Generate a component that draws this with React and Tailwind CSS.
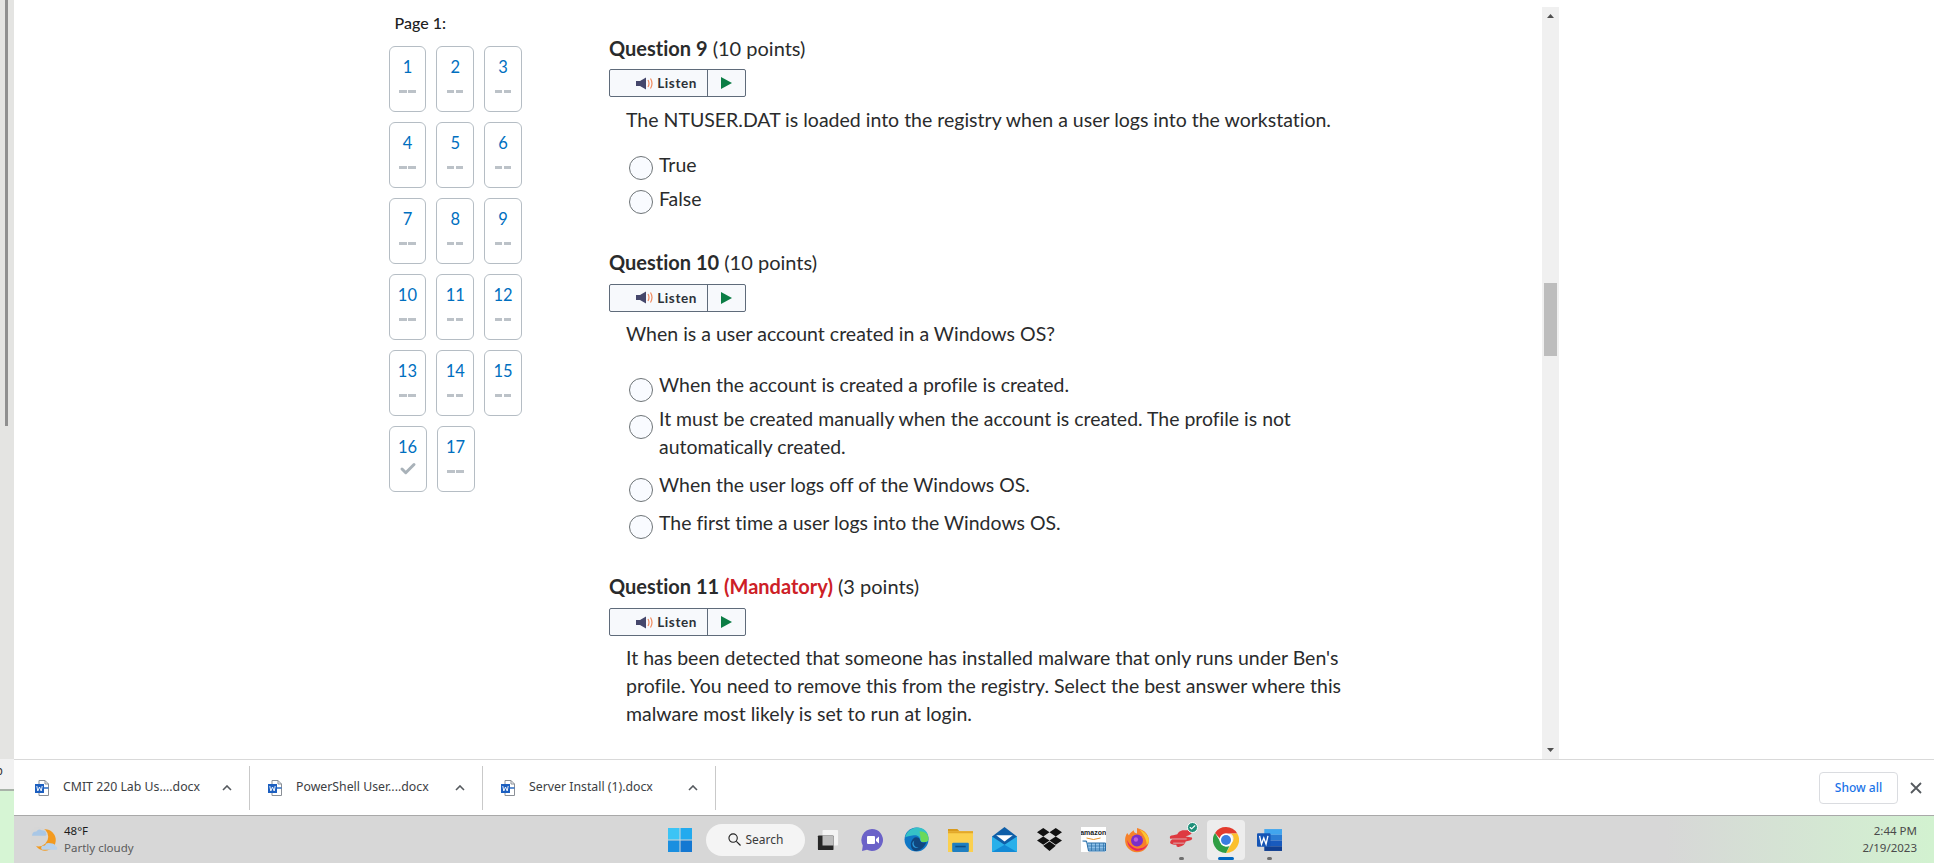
import { Check } from 'lucide-react'

const LATO = "font-['Lato',sans-serif]"
const NAV_ROWS = [
  ['1', '2', '3'],
  ['4', '5', '6'],
  ['7', '8', '9'],
  ['10', '11', '12'],
  ['13', '14', '15'],
  ['16', '17'],
]

function NavCard({ n }) {
  return (
    <div className="w-[38px] h-[66px] rounded-[6px] border border-[#b5bdc4] flex flex-col items-center bg-white">
      <span className="mt-[8px] h-[24px] leading-[24px] text-[16.500px] text-[#006fbf]">{n}</span>
      {n === '16' ? (
        <Check className="mt-[1px] w-[18px] h-[18px] text-[#a9b2b9]" strokeWidth={4} />
      ) : (
        <span className="mt-[11px] flex gap-[1.500px]">
          <span className="w-[7.500px] h-[3px] bg-[#bcc2c8]" />
          <span className="w-[7.500px] h-[3px] bg-[#bcc2c8]" />
        </span>
      )}
    </div>
  )
}

function Listen() {
  return (
    <div className="w-[137px] h-[28px] flex border border-[#5f6b7a] rounded-[2px] bg-[#f7f9fc]">
      <div className="w-[98px] flex items-center justify-end pr-[10px] border-r border-[#5f6b7a]">
        <svg viewBox="0 0 18 14" className="w-[18px] h-[15px] mr-[3px]">
          <path d="M0 4.500h4L10 1v12L4 9.500H0z" fill="#45476b" />
          <path d="M12 3.500q2 3.500 0 7M14.500 2q3 5 0 10" fill="none" stroke="#f08a5d" strokeWidth="1.200" />
        </svg>
        <span className="text-[13.500px] font-bold tracking-[0.6px] text-[#2c3138]">Listen</span>
      </div>
      <div className="flex-1 flex items-center justify-center">
        <svg viewBox="0 0 11 12" className="w-[11px] h-[12px]"><path d="M0 0l11 6-11 6z" fill="#0b7d45" /></svg>
      </div>
    </div>
  )
}

function Heading({ label, mandatory, points, className = '' }) {
  return (
    <div className={`h-[28px] leading-[28px] text-[20px] text-[#2a2b2c] ${className}`}>
      <span className="font-bold">{label}</span>
      {mandatory && <span className="font-bold text-[#cd2026]"> (Mandatory)</span>}
      <span> ({points} points)</span>
    </div>
  )
}

function Option({ children, className = '', radio = 'mt-[5px]' }) {
  return (
    <div className={`flex pl-[20px] ${className}`}>
      <div className="w-[24px] h-[28px] shrink-0">
        <div className={`w-[24px] h-[24px] rounded-full border border-[#6e7477] bg-[#f9fbff] ${radio}`} />
      </div>
      <span className="ml-[6px] w-[660px] leading-[28px] text-[19.450px] text-[#2a2b2c]">{children}</span>
    </div>
  )
}

function Body({ children, className = '' }) {
  return <p className={`ml-[17px] w-[725px] text-[19.500px] leading-[27.700px] text-[#2a2b2c] ${className}`}>{children}</p>
}

function Questions() {
  return (
    <div className="ml-[87px] pt-[34px] shrink-0">
      <Heading label="Question 9" points="10" />
      <div className="mt-[7px]"><Listen /></div>
      <Body className="mt-[9px]">The NTUSER.DAT is loaded into the registry when a user logs into the workstation.</Body>
      <Option className="mt-[17px]">True</Option>
      <Option className="mt-[6px]">False</Option>

      <Heading label="Question 10" points="10" className="mt-[35px]" />
      <div className="mt-[8px]"><Listen /></div>
      <Body className="mt-[8px]">When is a user account created in a Windows OS?</Body>
      <Option className="mt-[24px]" radio="mt-[7px]">When the account is created a profile is created.</Option>
      <Option className="mt-[6px]" radio="mt-[10px]">It must be created manually when the account is created. The profile is not automatically created.</Option>
      <Option className="mt-[10px]" radio="mt-[7px]">When the user logs off of the Windows OS.</Option>
      <Option className="mt-[10px]" radio="mt-[6px]">The first time a user logs into the Windows OS.</Option>

      <Heading label="Question 11" mandatory points="3" className="mt-[35px]" />
      <div className="mt-[8px]"><Listen /></div>
      <Body className="mt-[8px]">
        It has been detected that someone has installed malware that only runs under Ben's profile. You need to remove this from the registry. Select the best answer where this malware most likely is set to run at login.
      </Body>
    </div>
  )
}

function DocIcon() {
  return (
    <svg viewBox="0 0 14 16" className="w-[14px] h-[16px] shrink-0">
      <path d="M4 .5h6l3.500 3.500v11.500H4z" fill="#fff" stroke="#8a8f96" />
      <path d="M10 .5V4h3.500" fill="none" stroke="#8a8f96" />
      <path d="M8 8h5.500" stroke="#2b6cc4" strokeWidth="1.500" />
      <rect x="0" y="4" width="9" height="9" fill="#1c5fc0" />
      <path d="M1.800 6l1 5 1.700-4 1.700 4 1-5" fill="none" stroke="#fff" strokeWidth=".9" />
    </svg>
  )
}

function Download({ name }) {
  return (
    <div className="w-[233px] h-[44px] flex items-center border-r border-[#c9c9c9]">
      <span className="ml-[18px]"><DocIcon /></span>
      <span className="ml-[14px] w-[153px] text-[12.300px] text-[#3c4043] font-['Noto_Sans',sans-serif] whitespace-nowrap">{name}</span>
      <svg viewBox="0 0 10 6" className="ml-[6px] w-[10px] h-[6px]"><path d="M1 5l4-4 4 4" fill="none" stroke="#55595e" strokeWidth="1.600" /></svg>
    </div>
  )
}

function Shelf() {
  return (
    <div className="h-[56px] bg-white border-t border-[#d9d9d9] flex items-center justify-between">
      <div className="flex pl-[3px]">
        <Download name="CMIT 220 Lab Us....docx" />
        <Download name="PowerShell User....docx" />
        <Download name="Server Install (1).docx" />
      </div>
      <div className="flex items-center font-['Noto_Sans',sans-serif]">
        <div className="w-[79px] h-[32px] rounded-[4px] border border-[#dadce0] flex items-center justify-center text-[12px] font-medium text-[#1a73e8]">Show all</div>
        <svg viewBox="0 0 12 12" className="ml-[12px] mr-[12px] w-[12px] h-[12px]"><path d="M1 1l10 10M11 1L1 11" stroke="#55595e" strokeWidth="1.800" /></svg>
      </div>
    </div>
  )
}

const TaskIcons = {
  taskview: (
    <svg viewBox="0 0 24 24" className="w-[22px] h-[22px]">
      <rect x="6" y="1" width="17" height="17" rx="1" fill="#f4f4f4" />
      <rect x="1" y="7" width="17" height="16" rx="1" fill="#262626" />
      <rect x="6" y="7" width="12" height="11" fill="#bdbdbd" />
    </svg>
  ),
  video: (
    <svg viewBox="0 0 24 24" className="w-[24px] h-[24px]">
      <path d="M12 1a11 11 0 1 1-5 20.800L2 23l.8-5.500A11 11 0 0 1 12 1z" fill="#6b62c8" />
      <rect x="7" y="8" width="8" height="8" rx="1" fill="#fff" />
      <path d="M16 11l3-2.500v7L16 13z" fill="#fff" />
    </svg>
  ),
  edge: (
    <svg viewBox="0 0 24 24" className="w-[25px] h-[25px]">
      <circle cx="12" cy="12" r="11.500" fill="#0f77c6" />
      <path d="M1 10C3 3 9 .5 13 .5c6 0 10.500 4.500 10.500 10 0 3-2 4-4.500 4-2 0-3.500-.5-3.500-2 0-3-3-5-6-4.500-4 .6-7 1-8.500 2z" fill="#35c1c7" />
      <path d="M15 4c5 0 8.500 3 8.500 7 0 3-2 3.500-4.500 3.500-1.500 0-3-.5-3-2C16 9 15 6 15 4z" fill="#6bd95a" />
      <path d="M9 11c2-2 6-1 6.500 2 .5 2 3 2.500 6 1.500-2 5.500-6 8.500-10 8.500-3 0-5-3-5-6.500 0-2 1-4 2.500-5.500z" fill="#10477f" />
      <path d="M10 13c-2 3 0 7 4 7-3 1-6-1-6-4 0-1 1-2 2-3z" fill="#2d9fe0" />
    </svg>
  ),
  folder: (
    <svg viewBox="0 0 24 24" className="w-[25px] h-[25px]">
      <path d="M0 2h9l2 2H0z" fill="#d99a1c" />
      <rect x="0" y="4" width="24" height="20" fill="#fbd04f" />
      <rect x="0" y="4" width="24" height="2" fill="#e3a82a" />
      <rect x="4" y="15" width="16" height="9" rx="1" fill="#1f7fc1" />
      <rect x="7" y="18" width="10" height="1.500" fill="#0d4f85" />
    </svg>
  ),
  mail: (
    <svg viewBox="0 0 24 24" className="w-[25px] h-[25px]">
      <path d="M0 9L12 0l12 9v15H0z" fill="#0f5fa8" />
      <path d="M4 8h16l-8 6z" fill="#fff" />
      <path d="M0 9l12 8 12-8v15H0z" fill="#29b0ea" />
      <path d="M0 24l12-7 12 7z" fill="#128ad6" />
    </svg>
  ),
  dropbox: (
    <svg viewBox="0 0 24 24" className="w-[25px] h-[25px]">
      <path d="M6 1l6 4-6 4-6-4zM18 1l6 4-6 4-6-4zM6 9l6 4-6 4-6-4zM18 9l6 4-6 4-6-4zM12 14l6 4-6 5-6-5z" fill="#111" />
    </svg>
  ),
  amazon: (
    <div className="w-[25px] h-[25px] bg-white flex flex-col items-center overflow-hidden">
      <span className="text-[7px] leading-[9px] font-bold text-[#222] font-['Liberation_Sans',sans-serif] mt-[1px]">amazon</span>
      <svg viewBox="0 0 24 15" className="w-[25px] h-[15px]">
        <path d="M5 1q7 3 14 0" fill="none" stroke="#e8952a" strokeWidth="1" />
        <path d="M1 4h4l2 10h17V6H6" fill="#8fc1e8" stroke="#2a6ea6" strokeWidth="1" />
        <path d="M10 6v8M14 6v8M18 6v8M22 6v8M6 9h18M7 12h17" stroke="#2a6ea6" strokeWidth=".7" />
      </svg>
    </div>
  ),
  firefox: (
    <svg viewBox="0 0 24 24" className="w-[26px] h-[26px]">
      <path d="M12 1c8 2 11 7 11 11.500A11 11 0 1 1 1 12c0-3 1-5 2-6.500.5 1 1 1.500 1.500 2C6 5 8 4 9 3c0 2 1 2.500 3 3 0-2 0-3.500 0-5z" fill="#f7812a" />
      <path d="M14 2c5 2 9 6 9 10.500 0 2-1 3-2 4 0-5-3-10-7-14.500z" fill="#fbc82f" />
      <path d="M3 12c0 6 5 10 10 10 4 0 7-2 9-6-3 3-6 4-9 4-4 0-8-3-10-8z" fill="#e9235f" />
      <circle cx="12" cy="12.500" r="5.500" fill="#7b2fc9" />
      <circle cx="11" cy="11.500" r="2" fill="#c05bd9" />
    </svg>
  ),
  lastpass: (
    <div className="relative w-[25px] h-[25px]">
      <svg viewBox="0 0 24 24" className="w-[25px] h-[25px]">
        <path d="M8 7q1-3 5-4h6q3 0 3 2t-3 3l-3 1 6 1q1 2-2 3l-4 1q-1 4-6 5-3 1-3-2-5 0-6-2 0-2 2-3l-2-1q-1-3 3-3z" fill="#de3a41" />
        <path d="M2 11.500h15M4 15.500h11" stroke="#d7d7d7" strokeWidth=".7" />
      </svg>
      <span className="absolute -top-[5px] right-[-4px] w-[11px] h-[11px] rounded-full bg-[#1d8f79] border border-white flex items-center justify-center">
        <Check className="w-[7px] h-[7px] text-white" strokeWidth={4} />
      </span>
    </div>
  ),
  chrome: (
    <svg viewBox="0 0 24 24" className="w-[26px] h-[26px]">
      <path d="M12 0a12 12 0 0 1 10.400 6H12a6 6 0 0 0-5.800 4.400L1.900 5.500A12 12 0 0 1 12 0z" fill="#e33b2e" />
      <path d="M22.400 6A12 12 0 0 1 12 24l5.200-9a6 6 0 0 0-.7-9z" fill="#fbc02d" />
      <path d="M12 24A12 12 0 0 1 1.900 5.500L7 14a6 6 0 0 0 8.200 3.500z" fill="#2f9e44" />
      <circle cx="12" cy="12" r="6" fill="#fff" />
      <circle cx="12" cy="12" r="4.600" fill="#3b7de0" />
    </svg>
  ),
  word: (
    <svg viewBox="0 0 24 24" className="w-[25px] h-[25px]">
      <rect x="7" y="2" width="17" height="5.500" fill="#41a5ee" />
      <rect x="7" y="7.500" width="17" height="5.500" fill="#2b7cd3" />
      <rect x="7" y="13" width="17" height="5.500" fill="#185abd" />
      <rect x="7" y="18.500" width="17" height="4.500" fill="#103f91" />
      <rect x="0" y="6" width="13" height="13" rx="1" fill="#1655b5" />
      <path d="M2.500 8.500l1.800 8 2.200-6 2.200 6 1.800-8" fill="none" stroke="#fff" strokeWidth="1.300" />
    </svg>
  ),
}

function TaskIcon({ name, running, active }) {
  return (
    <div className="w-[44.200px] h-[48px] flex items-center justify-center">
      <div className={`w-[38px] h-[40px] rounded-[4px] flex flex-col items-center justify-center relative ${active ? 'bg-[#ededed]' : ''}`}>
        {TaskIcons[name]}
        {running && <span className="absolute bottom-[0px] w-[5px] h-[3px] rounded-full bg-[#6e6e6e]" />}
        {active && <span className="absolute bottom-[0px] w-[16px] h-[3px] rounded-full bg-[#0067c0]" />}
      </div>
    </div>
  )
}

function Weather() {
  return (
    <svg viewBox="0 0 26 26" className="w-[28px] h-[28px]">
      <circle cx="13" cy="13" r="10" fill="#f39a1f" />
      <circle cx="7" cy="10" r="9" fill="#d6d6d6" />
      <path d="M1 9q0-4 4-4 2-3 5-1 4 0 4 3 1 2-1 2z" fill="#a9c7e6" />
      <path d="M10 22q-2-4 3-4 1-3 5-2 4 0 5 3 2 1 1 3z" fill="#b9d2ec" />
    </svg>
  )
}

function Taskbar() {
  return (
    <div className="h-[48px] border-t border-[#a9a9a9] flex items-center bg-[linear-gradient(90deg,#d7d7d7_0%,#d7d7d7_86%,#d2f2d0_100%)] font-['Noto_Sans',sans-serif] overflow-hidden">
      <div className="w-[654px] flex items-center pl-[17px]">
        <Weather />
        <div className="ml-[5px] -mt-[2px] text-[11.500px] leading-[17px]">
          <div className="text-[#1b1b1b]">48°F</div>
          <div className="text-[#5c5c5c]">Partly cloudy</div>
        </div>
      </div>
      <svg viewBox="0 0 24 24" className="w-[24px] h-[24px]">
        <rect x="0" y="0" width="11.500" height="11.500" fill="#3cc4f5" />
        <rect x="12.500" y="0" width="11.500" height="11.500" fill="#23aaee" />
        <rect x="0" y="12.500" width="11.500" height="11.500" fill="#1a8fe0" />
        <rect x="12.500" y="12.500" width="11.500" height="11.500" fill="#1478d2" />
      </svg>
      <div className="ml-[14px] w-[99px] h-[32px] rounded-full bg-[#f4f4f4] flex items-center justify-center gap-[5px] text-[12px] text-[#3a3a3a]">
        <svg viewBox="0 0 14 14" className="w-[13px] h-[13px]">
          <circle cx="5.500" cy="5.500" r="4.500" fill="none" stroke="#222" strokeWidth="1.200" />
          <path d="M9 9l4.500 4.500" stroke="#222" strokeWidth="1.300" />
        </svg>
        Search
      </div>
      <div className="flex ml-[1px]">
        <TaskIcon name="taskview" />
        <TaskIcon name="video" />
        <TaskIcon name="edge" />
        <TaskIcon name="folder" />
        <TaskIcon name="mail" />
        <TaskIcon name="dropbox" />
        <TaskIcon name="amazon" />
        <TaskIcon name="firefox" />
        <TaskIcon name="lastpass" running />
        <TaskIcon name="chrome" active />
        <TaskIcon name="word" running />
      </div>
      <div className="ml-auto -mt-[2px] pr-[17px] text-right text-[11.500px] leading-[17px] text-[#4a4a4a]">
        <div>2:44 PM</div>
        <div>2/19/2023</div>
      </div>
    </div>
  )
}

function Scrollbar() {
  return (
    <div className="w-[17px] mt-[7px] h-[752px] bg-[#f0f0f0] flex flex-col items-center shrink-0">
      <svg viewBox="0 0 7 4" className="mt-[7px] w-[7px] h-[4px]"><path d="M3.500 0L7 4H0z" fill="#505050" /></svg>
      <div className="mt-[265px] w-[13px] h-[73px] bg-[#bdbdbd]" />
      <svg viewBox="0 0 7 4" className="mt-auto mb-[7px] w-[7px] h-[4px]"><path d="M3.500 4L7 0H0z" fill="#505050" /></svg>
    </div>
  )
}

function LeftStrip() {
  return (
    <div className="w-[14px] h-[863px] flex flex-col shrink-0">
      <div className="h-[759px] bg-[#e4e4e2] flex">
        <div className="ml-[5px] w-[3px] h-[426px] bg-[#8f8f8f]" />
      </div>
      <div className="h-[32px] bg-[#f1f1f1] border-b-2 border-[#a9b3a9] text-[12px] leading-[24px] text-[#333] overflow-hidden font-['Roboto',sans-serif]">
        <span className="-ml-[4px] inline-block">b</span>
      </div>
      <div className="flex-1 bg-[#d6f5d4]" />
    </div>
  )
}

export default function App() {
  return (
    <div className={`w-[1934px] h-[863px] flex overflow-hidden bg-white [font-variant-ligatures:none] ${LATO}`}>
      <LeftStrip />
      <div className="flex-1 flex flex-col min-w-0">
        <div className="h-[759px] flex overflow-hidden">
          <div className="w-[1528px] flex pl-[374.500px] overflow-hidden shrink-0">
            <div className="w-[133.500px] shrink-0">
              <div className="mt-[13px] ml-[6px] h-[20px] leading-[20px] text-[16px] font-medium text-[#202122] whitespace-nowrap">Page 1:</div>
              <div className="mt-[13px] flex flex-col gap-[10px]">
                {NAV_ROWS.map((row) => (
                  <div key={row[0]} className="flex gap-[10px]">
                    {row.map((n) => <NavCard key={n} n={n} />)}
                  </div>
                ))}
              </div>
            </div>
            <Questions />
          </div>
          <Scrollbar />
        </div>
        <Shelf />
        <Taskbar />
      </div>
    </div>
  )
}
